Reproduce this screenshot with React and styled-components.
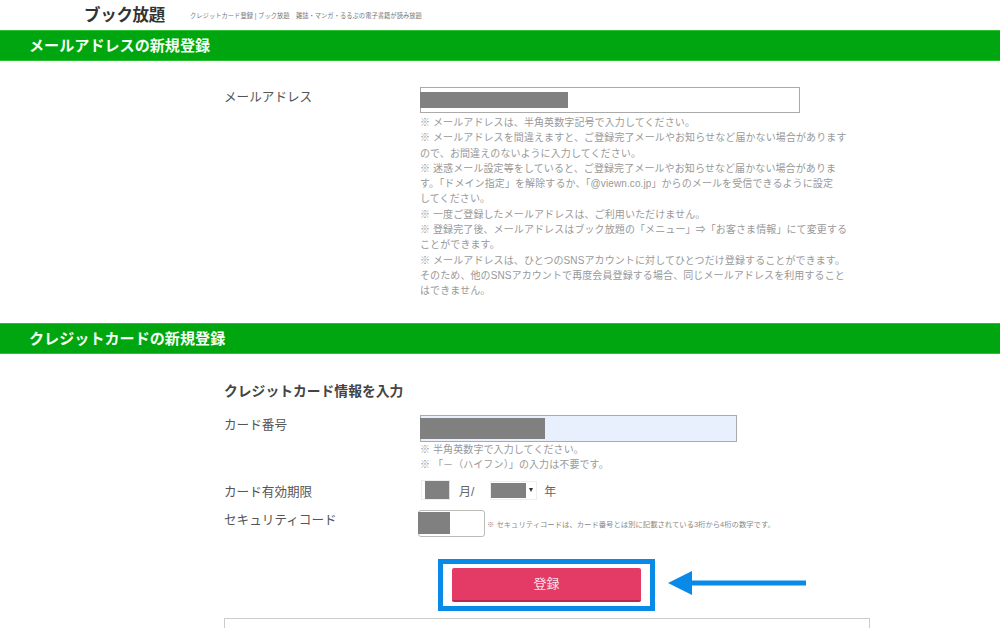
import React from "react";
import styled, { createGlobalStyle } from "styled-components";

const Global = createGlobalStyle`
  html, body { margin: 0; padding: 0; background: #fff; }
  body { height: 628px; overflow: hidden; font-family: "Liberation Sans", "Noto Sans CJK JP", sans-serif; color: #555; }
`;

const Header = styled.header`
  height: 30px; display: flex; align-items: center; padding-left: 84px; box-sizing: border-box;
`;
const Logo = styled.div`
  width: 106px; font-size: 16.5px; font-weight: 700; color: #333; line-height: 30px; white-space: nowrap; letter-spacing: -.3px;
`;
const Tagline = styled.div`
  font-size: 6.3px; color: #777; white-space: nowrap;
`;
const Band = styled.h2`
  margin: 0; height: 31px; background: #00a60f; color: #f2fff2; font-size: 15.1px; font-weight: 700;
  line-height: 30px; padding-left: 29px; box-sizing: border-box; border-top: 1px solid #2cc033; border-bottom: 1px solid #2cc033;
`;
const Section = styled.section`
  padding: ${p => p.$top}px 0 ${p => p.$bottom}px 224px;
`;
const Row = styled.div`
  display: grid; grid-template-columns: 196px 1fr; margin-bottom: ${p => p.$mb || 0}px;
`;
const Label = styled.div`
  font-size: 12.6px; line-height: 18px; color: #555; white-space: nowrap; padding-top: ${p => p.$pt || 0}px;
`;
const Field = styled.div`
  width: ${p => p.$w}px; height: ${p => p.$h}px; box-sizing: border-box; display: flex; align-items: center;
  border: 1px solid #aaa; background: ${p => p.$bg || "#fff"};
`;
const Redacted = styled.div`
  width: ${p => p.$w}px; height: ${p => p.$h}px; background: #808080; flex: none; margin-left: ${p => p.$ml || 0}px;
`;
const Notes = styled.div`
  width: ${p => p.$w || 430}px; font-size: 10px; letter-spacing: .1px; line-height: 15.3px; color: #999; padding-top: ${p => p.$pt || 0}px; white-space: nowrap;
`;
const Heading = styled.h3`
  margin: 0 0 13px; font-size: 13.8px; line-height: 20px; font-weight: 700; color: #444;
`;
const Inline = styled.div`
  display: flex; align-items: center; height: ${p => p.$h}px; font-size: 12px; color: #666;
`;
const MonthBox = styled.div`
  width: 29px; height: 20px; box-sizing: border-box; border: 1px solid #eee; border-right-color: #ddd; display: flex; align-items: center; padding-left: 3px; margin-left: 1px;
`;
const Unit = styled.span`
  margin-left: ${p => p.$ml}px; white-space: nowrap;
`;
const YearSelect = styled.div`
  width: 47px; height: 19px; box-sizing: border-box; border: 1px solid #eee; display: flex; align-items: center; margin-left: ${p => p.$ml}px;
`;
const Caret = styled.span`
  width: 0; height: 0; margin-left: 3px; border-left: 2.5px solid transparent; border-right: 2.5px solid transparent; border-top: 4px solid #333;
`;
const SecurityWrap = styled.div`
  display: flex; align-items: center; margin-left: -2px;
`;
const SecurityBox = styled.div`
  width: 67px; height: 27px; box-sizing: border-box; border: 1px solid #bbb; border-radius: 3px; display: flex; align-items: flex-start; padding-top: 1px; background: #fff;
`;
const SecurityNote = styled.span`
  font-size: 7.35px; color: #888; margin-left: 2px; white-space: nowrap;
`;
const Action = styled.div`
  display: flex; align-items: center; margin-left: 214px;
`;
const Highlight = styled.div`
  width: 217px; height: 52px; box-sizing: border-box; border: 5px solid #0a8ae8; display: flex; align-items: center; justify-content: center;
`;
const Submit = styled.button`
  width: 189px; height: 34px; border: 0; border-bottom: 2px solid #b52a50; border-radius: 2px; background: #e33a66; color: #fbe4ea; font: 400 13px "Liberation Sans", "Noto Sans CJK JP", sans-serif; padding: 0 0 3px;
`;
const Arrow = styled.svg`
  margin: -4px 0 0 13px; flex: none;
`;
const BottomBox = styled.div`
  width: 646px; height: 20px; box-sizing: border-box; margin-top: 7px; border: 1px solid #ccc; border-bottom: 0;
`;

export default function App() {
  return (
    <>
      <Global />
      <Header>
        <Logo>ブック放題</Logo>
        <Tagline>クレジットカード登録 | ブック放題　雑誌・マンガ・るるぶの電子書籍が読み放題</Tagline>
      </Header>
      <Band>メールアドレスの新規登録</Band>
      <Section $top={26} $bottom={24}>
        <Row>
          <Label $pt={1}>メールアドレス</Label>
          <div>
            <Field $w={380} $h={26}><Redacted $w={148} $h={16} $ml={-1} /></Field>
            <Notes $pt={2}>
              ※ メールアドレスは、半角英数字記号で入力してください。<br />
              ※ メールアドレスを間違えますと、ご登録完了メールやお知らせなど届かない場合があります<br />
              ので、お間違えのないように入力してください。<br />
              ※ 迷惑メール設定等をしていると、ご登録完了メールやお知らせなど届かない場合がありま<br />
              す。「ドメイン指定」を解除するか、「@viewn.co.jp」からのメールを受信できるように設定<br />
              してください。<br />
              ※ 一度ご登録したメールアドレスは、ご利用いただけません。<br />
              ※ 登録完了後、メールアドレスはブック放題の「メニュー」⇒「お客さま情報」にて変更する<br />
              ことができます。<br />
              ※ メールアドレスは、ひとつのSNSアカウントに対してひとつだけ登録することができます。<br />
              そのため、他のSNSアカウントで再度会員登録する場合、同じメールアドレスを利用すること<br />
              はできません。
            </Notes>
          </div>
        </Row>
      </Section>
      <Band>クレジットカードの新規登録</Band>
      <Section $top={28} $bottom={0}>
        <Heading>クレジットカード情報を入力</Heading>
        <Row $mb={7}>
          <Label $pt={1}>カード番号</Label>
          <div>
            <Field $w={317} $h={27} $bg="#e8f0fe"><Redacted $w={125} $h={21} $ml={-1} /></Field>
            <Notes $w={320}>
              ※ 半角英数字で入力してください。<br />
              ※ 「－（ハイフン）」の入力は不要です。
            </Notes>
          </div>
        </Row>
        <Row $mb={9}>
          <Label $pt={4}>カード有効期限</Label>
          <Inline $h={22}>
            <MonthBox><Redacted $w={24} $h={18} /></MonthBox>
            <Unit $ml={9}>月/</Unit>
            <YearSelect $ml={16}><Redacted $w={35} $h={15} /><Caret /></YearSelect>
            <Unit $ml={7}>年</Unit>
          </Inline>
        </Row>
        <Row $mb={22}>
          <Label $pt={1}>セキュリティコード</Label>
          <SecurityWrap>
            <SecurityBox><Redacted $w={32} $h={22} $ml={-1} /></SecurityBox>
            <SecurityNote>※ セキュリティコードは、カード番号とは別に記載されている3桁から4桁の数字です。</SecurityNote>
          </SecurityWrap>
        </Row>
        <Action>
          <Highlight><Submit>登録</Submit></Highlight>
          <Arrow width="138" height="26" viewBox="0 0 138 26">
            <path d="M0 13 L24 1 L24 10.5 L138 10.5 L138 15.5 L24 15.5 L24 25 Z" fill="#0a8ae8" />
          </Arrow>
        </Action>
        <BottomBox />
      </Section>
    </>
  );
}
